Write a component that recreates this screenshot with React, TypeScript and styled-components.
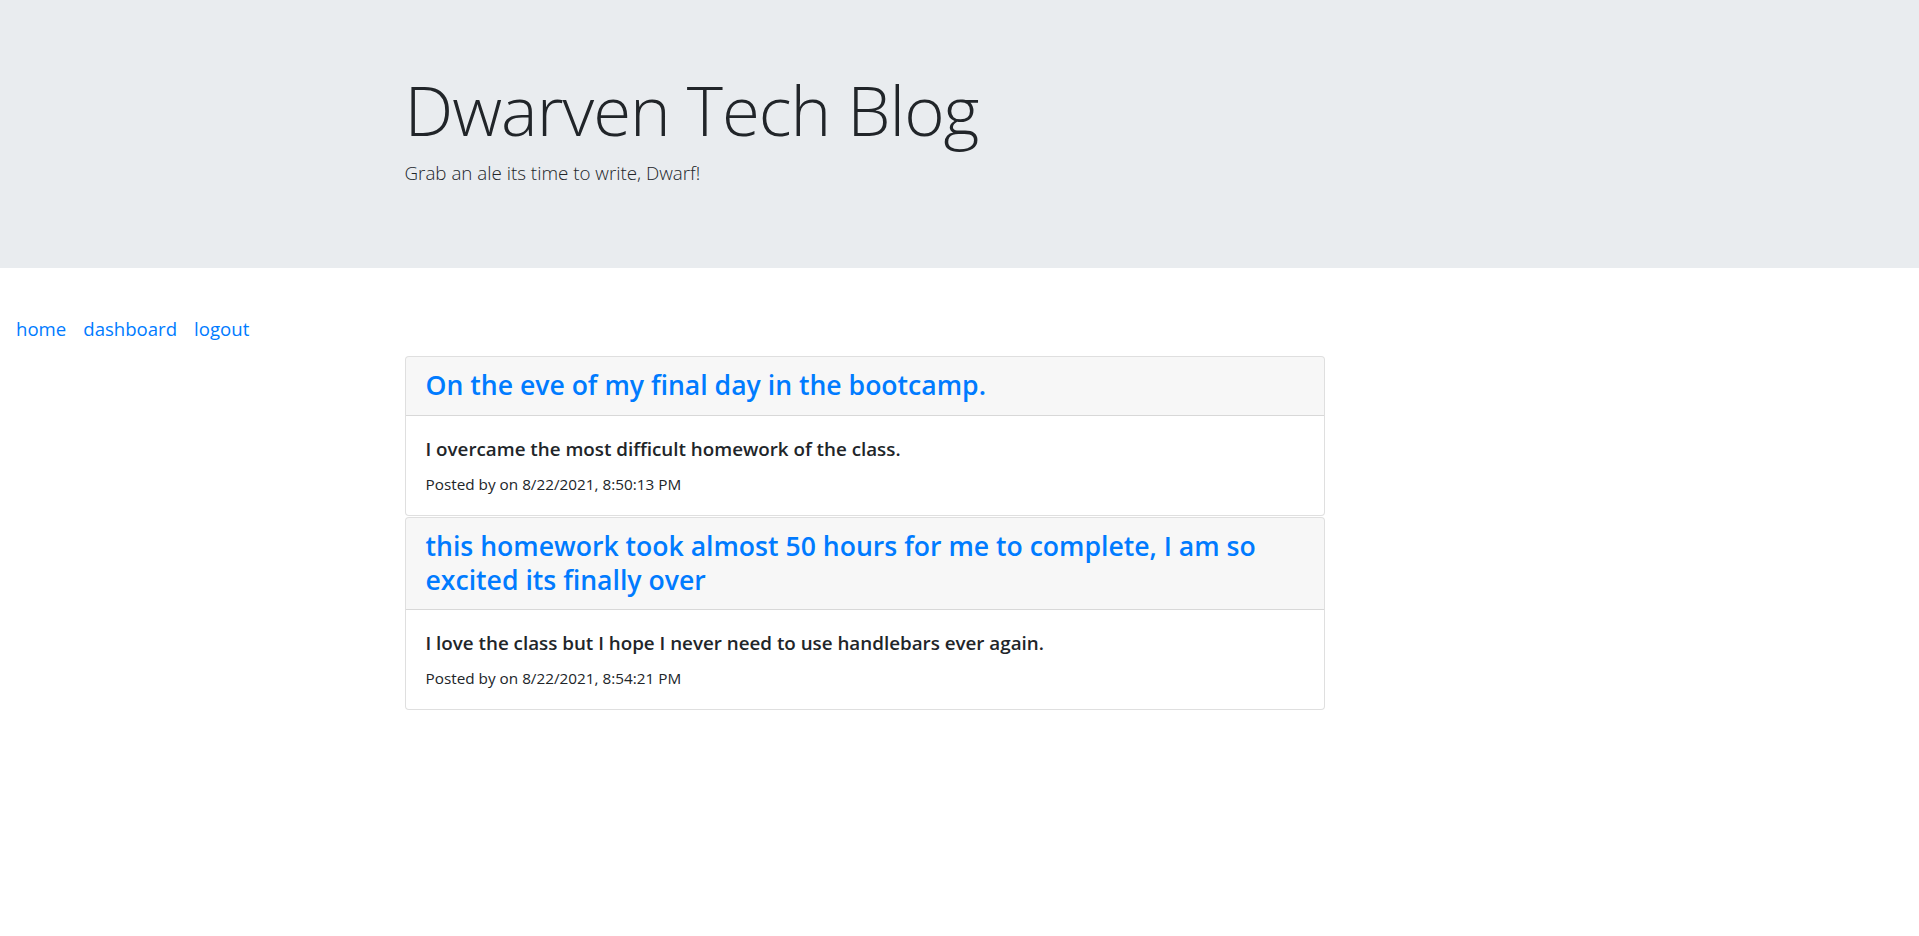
import React from "react";
import styled, { createGlobalStyle } from "styled-components";

const GlobalStyle = createGlobalStyle`
  html, body {
    margin: 0;
    padding: 0;
    background: #ffffff;
  }
  body {
    font-family: "Open Sans", "Noto Sans", "Liberation Sans", sans-serif;
    font-size: 16px;
    line-height: 1.5;
    color: #212529;
  }
  * { box-sizing: border-box; }
`;

const Jumbotron = styled.header`
  background: #e9ecef;
  padding: 64px 0;
  margin-bottom: 32px;
`;

const Container = styled.div`
  width: 1110px;
  margin: 0 auto;
`;

const Title = styled.h1`
  margin: 2px 0 6px;
  font-size: 69px;
  font-weight: 300;
  letter-spacing: -1px;
  line-height: 86.4px;
  color: #212529;
`;

const Lead = styled.p`
  margin: 0 0 16px;
  font-size: 18.8px;
  font-weight: 300;
  line-height: 30px;
`;

const Nav = styled.nav`
  display: flex;
  gap: 17px;
  padding: 15px 16px 14px;
`;

const NavLink = styled.a`
  color: #007bff;
  text-decoration: none;
  font-size: 18.6px;
  line-height: 27px;
`;

const PostList = styled.main`
  width: 920px;
  display: flex;
  flex-direction: column;
  gap: 1px;
`;

const Card = styled.article`
  border: 1px solid rgba(0, 0, 0, 0.125);
  border-radius: 4px;
  background: #fff;
  overflow: hidden;
`;

const CardHeader = styled.div`
  background: rgba(0, 0, 0, 0.03);
  border-bottom: 1px solid rgba(0, 0, 0, 0.125);
  padding: 12px 20px;
`;

const PostTitle = styled.h3`
  margin: 0;
  font-size: 26.6px;
  font-weight: 600;
  line-height: 33.6px;
  color: #007bff;
`;

const CardBody = styled.div`
  padding: 21px 20px 19px;
`;

const PostContent = styled.h5`
  margin: 0 0 11px;
  font-size: 18.8px;
  font-weight: 600;
  line-height: 24px;
  color: #212529;
`;

const Meta = styled.p`
  margin: 0;
  font-size: 15.3px;
  line-height: 24px;
  color: #212529;
`;

const posts = [
  {
    title: "On the eve of my final day in the bootcamp.",
    content: "I overcame the most difficult homework of the class.",
    date: "8/22/2021, 8:50:13 PM",
  },
  {
    title:
      "this homework took almost 50 hours for me to complete, I am so excited its finally over",
    content: "I love the class but I hope I never need to use handlebars ever again.",
    date: "8/22/2021, 8:54:21 PM",
  },
];

export default function App() {
  return (
    <>
      <GlobalStyle />
      <Jumbotron>
        <Container>
          <Title>Dwarven Tech Blog</Title>
          <Lead>Grab an ale its time to write, Dwarf!</Lead>
        </Container>
      </Jumbotron>
      <Nav>
        <NavLink href="#">home</NavLink>
        <NavLink href="#">dashboard</NavLink>
        <NavLink href="#">logout</NavLink>
      </Nav>
      <Container>
        <PostList>
          {posts.map((p) => (
            <Card key={p.date}>
              <CardHeader>
                <PostTitle>{p.title}</PostTitle>
              </CardHeader>
              <CardBody>
                <PostContent>{p.content}</PostContent>
                <Meta>Posted by on {p.date}</Meta>
              </CardBody>
            </Card>
          ))}
        </PostList>
      </Container>
    </>
  );
}
